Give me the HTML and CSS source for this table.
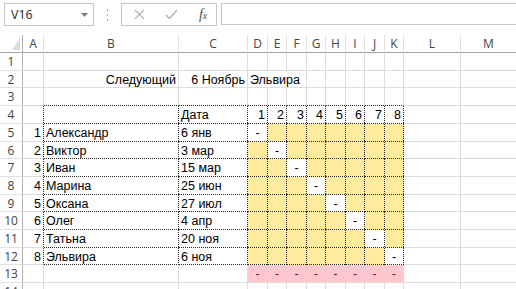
FILE: index.html
```html
<!DOCTYPE html>
<html>
<head>
<meta charset="utf-8">
<link rel="stylesheet" href="styles.css">
</head>
<body>
<div class="toolbar">
  <div class="namebox"><span>V16</span><svg class="dd" width="7" height="4" viewBox="0 0 7 4"><path d="M0 0h7L3.5 4z" fill="#7a7a7a"/></svg></div>
  <div class="grip"><i></i><i></i><i></i></div>
  <div class="fxbtns">
    <svg class="ic" width="11" height="11" viewBox="0 0 11 11"><path d="M1 1L10 10M10 1L1 10" stroke="#b4b4b4" stroke-width="1.2" fill="none"/></svg>
    <svg class="ic" width="13" height="11" viewBox="0 0 13 11"><path d="M1 6L4.5 9.5L12 1" stroke="#b4b4b4" stroke-width="1.4" fill="none"/></svg>
    <span class="fx">f<span class="sx">x</span></span>
  </div>
  <div class="formula"></div>
</div>
<div class="sheet">
  <div class="r hdr">
    <div class="corner"><svg width="8" height="12" viewBox="0 0 8 12"><path d="M8 0V12H0z" fill="#dcdcdc"/></svg></div>
    <div class="ch">A</div><div class="ch">B</div><div class="ch">C</div><div class="ch">D</div><div class="ch">E</div><div class="ch">F</div><div class="ch">G</div><div class="ch">H</div><div class="ch">I</div><div class="ch">J</div><div class="ch">K</div><div class="ch">L</div><div class="ch">M</div>
  </div>
  <div class="r">
    <div class="rh">1</div><div class="c"></div><div class="c"></div><div class="c"></div><div class="c"></div><div class="c"></div><div class="c"></div><div class="c"></div><div class="c"></div><div class="c"></div><div class="c"></div><div class="c"></div><div class="c"></div><div class="c"></div>
  </div>
  <div class="r s">
    <div class="rh">2</div><div class="c"></div><div class="c ra">Следующий</div><div class="c ra">6 Ноябрь</div><div class="c nr">Эльвира</div><div class="c nr"></div><div class="c"></div><div class="c"></div><div class="c"></div><div class="c"></div><div class="c"></div><div class="c"></div><div class="c"></div><div class="c"></div>
  </div>
  <div class="r">
    <div class="rh">3</div><div class="c"></div><div class="c db"></div><div class="c db"></div><div class="c db"></div><div class="c db"></div><div class="c db"></div><div class="c db"></div><div class="c db"></div><div class="c db"></div><div class="c db"></div><div class="c db"></div><div class="c"></div><div class="c"></div>
  </div>
  <div class="r">
    <div class="rh">4</div><div class="c dr"></div><div class="c t"></div><div class="c t">Дата</div><div class="c t ra">1</div><div class="c t ra">2</div><div class="c t ra">3</div><div class="c t ra">4</div><div class="c t ra">5</div><div class="c t ra">6</div><div class="c t ra">7</div><div class="c t ra">8</div><div class="c"></div><div class="c"></div>
  </div>
  <div class="r">
    <div class="rh">5</div><div class="c dr ra">1</div><div class="c t">Александр</div><div class="c t">6 янв</div><div class="c t ctr">-</div><div class="c t y"></div><div class="c t y"></div><div class="c t y"></div><div class="c t y"></div><div class="c t y"></div><div class="c t y"></div><div class="c t y"></div><div class="c"></div><div class="c"></div>
  </div>
  <div class="r s">
    <div class="rh">6</div><div class="c dr ra">2</div><div class="c t">Виктор</div><div class="c t">3 мар</div><div class="c t y"></div><div class="c t ctr">-</div><div class="c t y"></div><div class="c t y"></div><div class="c t y"></div><div class="c t y"></div><div class="c t y"></div><div class="c t y"></div><div class="c"></div><div class="c"></div>
  </div>
  <div class="r">
    <div class="rh">7</div><div class="c dr ra">3</div><div class="c t">Иван</div><div class="c t">15 мар</div><div class="c t y"></div><div class="c t y"></div><div class="c t ctr">-</div><div class="c t y"></div><div class="c t y"></div><div class="c t y"></div><div class="c t y"></div><div class="c t y"></div><div class="c"></div><div class="c"></div>
  </div>
  <div class="r">
    <div class="rh">8</div><div class="c dr ra">4</div><div class="c t">Марина</div><div class="c t">25 июн</div><div class="c t y"></div><div class="c t y"></div><div class="c t y"></div><div class="c t ctr">-</div><div class="c t y"></div><div class="c t y"></div><div class="c t y"></div><div class="c t y"></div><div class="c"></div><div class="c"></div>
  </div>
  <div class="r s">
    <div class="rh">9</div><div class="c dr ra">5</div><div class="c t">Оксана</div><div class="c t">27 июл</div><div class="c t y"></div><div class="c t y"></div><div class="c t y"></div><div class="c t y"></div><div class="c t ctr">-</div><div class="c t y"></div><div class="c t y"></div><div class="c t y"></div><div class="c"></div><div class="c"></div>
  </div>
  <div class="r">
    <div class="rh">10</div><div class="c dr ra">6</div><div class="c t">Олег</div><div class="c t">4 апр</div><div class="c t y"></div><div class="c t y"></div><div class="c t y"></div><div class="c t y"></div><div class="c t y"></div><div class="c t ctr">-</div><div class="c t y"></div><div class="c t y"></div><div class="c"></div><div class="c"></div>
  </div>
  <div class="r">
    <div class="rh">11</div><div class="c dr ra">7</div><div class="c t">Татьна</div><div class="c t">20 ноя</div><div class="c t y"></div><div class="c t y"></div><div class="c t y"></div><div class="c t y"></div><div class="c t y"></div><div class="c t y"></div><div class="c t ctr">-</div><div class="c t y"></div><div class="c"></div><div class="c"></div>
  </div>
  <div class="r s">
    <div class="rh">12</div><div class="c dr ra">8</div><div class="c t">Эльвира</div><div class="c t">6 ноя</div><div class="c t y"></div><div class="c t y"></div><div class="c t y"></div><div class="c t y"></div><div class="c t y"></div><div class="c t y"></div><div class="c t y"></div><div class="c t ctr">-</div><div class="c"></div><div class="c"></div>
  </div>
  <div class="r">
    <div class="rh">13</div><div class="c"></div><div class="c"></div><div class="c"></div><div class="c p">-</div><div class="c p">-</div><div class="c p">-</div><div class="c p">-</div><div class="c p">-</div><div class="c p">-</div><div class="c p">-</div><div class="c p">-</div><div class="c"></div><div class="c"></div>
  </div>
  <div class="r">
    <div class="rh">14</div><div class="c"></div><div class="c"></div><div class="c"></div><div class="c"></div><div class="c"></div><div class="c"></div><div class="c"></div><div class="c"></div><div class="c"></div><div class="c"></div><div class="c"></div><div class="c"></div><div class="c"></div>
  </div>
</div>
</body>
</html>
```
FILE: styles.css
```css
html, body {
  margin: 0;
  padding: 0;
  background: #fff;
}
body {
  width: 516px;
  height: 289px;
  overflow: hidden;
  font-family: "Liberation Sans", Arial, sans-serif;
}
.toolbar {
  height: 35px;
  box-sizing: border-box;
  padding: 3px 0 0 4px;
  display: flex;
  align-items: flex-start;
}
.namebox {
  width: 90px;
  height: 23px;
  box-sizing: border-box;
  border: 1px solid #c6c6c6;
  display: flex;
  align-items: center;
  justify-content: space-between;
  padding: 0 5px 0 6px;
  font-family: "Open Sans", "Noto Sans", sans-serif;
  font-size: 12.5px;
  color: #262626;
}
.dd { margin-top: 1px; }
.grip {
  width: 27px;
  height: 23px;
  display: flex;
  flex-direction: column;
  align-items: center;
  justify-content: center;
  gap: 3px;
}
.grip i {
  width: 1px;
  height: 2px;
  background: #a8a8a8;
  display: block;
}
.fxbtns {
  width: 96px;
  height: 23px;
  box-sizing: border-box;
  border: 1px solid #c6c6c6;
  display: flex;
  align-items: center;
  justify-content: space-between;
  padding: 0 9px 0 12px;
}
.fx {
  font-family: "Liberation Serif", "DejaVu Serif", serif;
  font-style: italic;
  font-size: 14px;
  color: #4a4a4a;
}
.sx { font-size: 9.5px; }
.formula {
  margin-left: 4px;
  flex: 1;
  height: 22px;
  box-sizing: border-box;
  border: 1px solid #c6c6c6;
  border-right: none;
}
.sheet {
  width: 517px;
}
.r {
  display: grid;
  grid-template-columns: 23px 21px 135px 69px 20px 19px 20px 19px 20px 19px 20px 19px 57px 56px;
  grid-template-rows: 100%;
  height: 18px;
  overflow: hidden;
}
.r.s { height: 17px; }
.corner {
  border-right: 1px solid #b0b0b0;
  border-bottom: 1px solid #a6a6a6;
  box-sizing: border-box;
  display: flex;
  align-items: flex-end;
  justify-content: flex-end;
  padding: 0 2px 2px 0;
}
.ch {
  box-sizing: border-box;
  border-right: 1px solid #e2e2e2;
  border-bottom: 1px solid #a6a6a6;
  display: flex;
  align-items: center;
  justify-content: center;
  font-family: "Open Sans", "Noto Sans", sans-serif;
  font-size: 12px;
  line-height: 14px;
  color: #444;
}
.rh {
  box-sizing: border-box;
  border-right: 1px solid #b0b0b0;
  border-bottom: 1px solid #e2e2e2;
  display: flex;
  align-items: center;
  justify-content: center;
  font-family: "Open Sans", "Noto Sans", sans-serif;
  font-size: 12px;
  line-height: 14px;
  color: #444;
  padding-top: 1px;
}
.c {
  box-sizing: border-box;
  border-right: 1px solid #dadcdd;
  border-bottom: 1px solid #dadcdd;
  display: flex;
  align-items: center;
  padding: 1px 2px 0 2px;
  white-space: nowrap;
  font-size: 12.5px;
  line-height: 14px;
  color: #000;
  min-width: 0;
  background-repeat: no-repeat;
  background-origin: border-box;
  background-clip: border-box;
}
.ra { justify-content: flex-end; }
.ctr { justify-content: center; padding: 1px 0 0 0; }
.nr { border-right-color: transparent; }
.db {
  border-bottom-color: transparent;
  background-image: repeating-linear-gradient(to right, #2a2a2a 0 1px, transparent 1px 2px);
  background-position: left bottom;
  background-size: 100% 1px;
}
.dr {
  border-right-color: transparent;
  background-image: repeating-linear-gradient(to bottom, #2a2a2a 0 1px, transparent 1px 2px);
  background-position: right top;
  background-size: 1px 100%;
}
.t {
  border-right-color: transparent;
  border-bottom-color: transparent;
  background-image:
    repeating-linear-gradient(to bottom, #2a2a2a 0 1px, transparent 1px 2px),
    repeating-linear-gradient(to right, #2a2a2a 0 1px, transparent 1px 2px);
  background-position: right top, left bottom;
  background-size: 1px 100%, 100% 1px;
}
.y { background-color: #ffeb9c; }
.p {
  background-color: #ffc7ce;
  border-right-color: #ffc7ce;
  color: #9c0006;
  justify-content: center;
  padding: 1px 0 0 0;
}
```
